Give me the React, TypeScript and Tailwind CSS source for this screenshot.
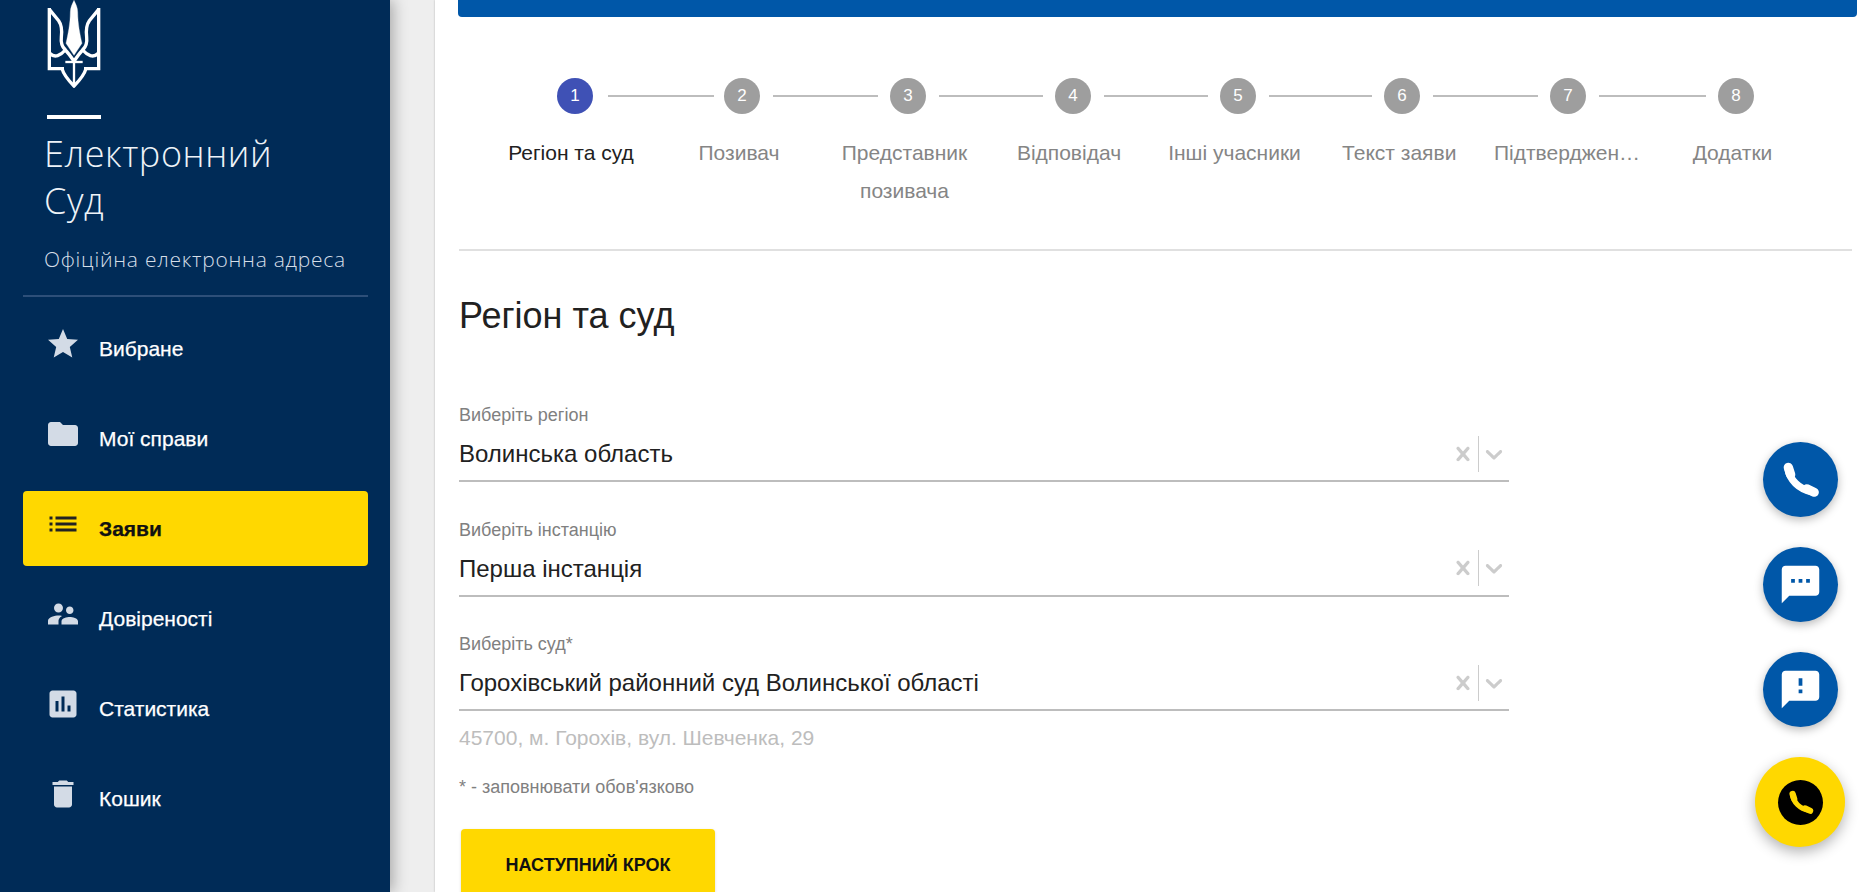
import type { ReactNode } from 'react';

const SANS = "font-['Liberation_Sans',Arial,sans-serif]";

// material icon paths
const icons = {
  star: 'M12 17.27L18.18 21l-1.64-7.03L22 9.24l-7.19-.61L12 2 9.19 8.63 2 9.24l5.46 4.73L5.82 21z',
  folder: 'M10 4H4c-1.1 0-1.99.9-1.99 2L2 18c0 1.1.9 2 2 2h16c1.1 0 2-.9 2-2V8c0-1.1-.9-2-2-2h-8l-2-2z',
  list: 'M3 13h2v-2H3v2zm0 4h2v-2H3v2zm0-8h2V7H3v2zm4 4h14v-2H7v2zm0 4h14v-2H7v2zM7 7v2h14V7H7z',
  people:
    'M16.5 12c1.38 0 2.49-1.12 2.49-2.5S17.88 7 16.5 7C15.12 7 14 8.12 14 9.5s1.12 2.5 2.5 2.5zM9 11c1.66 0 2.99-1.34 2.99-3S10.66 5 9 5C7.34 5 6 6.34 6 8s1.34 3 3 3zm7.5 3c-1.83 0-5.5.92-5.5 2.75V19h11v-2.25c0-1.83-3.67-2.75-5.5-2.75zM9 13c-2.33 0-7 1.17-7 3.5V19h7v-2.25c0-.85.33-2.34 2.37-3.47C10.5 13.1 9.66 13 9 13z',
  chart:
    'M19 3H5c-1.1 0-2 .9-2 2v14c0 1.1.9 2 2 2h14c1.1 0 2-.9 2-2V5c0-1.1-.9-2-2-2zM9 17H7v-7h2v7zm4 0h-2V7h2v10zm4 0h-2v-4h2v4z',
  trash: 'M6 19c0 1.1.9 2 2 2h8c1.1 0 2-.9 2-2V7H6v12zM19 4h-3.5l-1-1h-5l-1 1H5v2h14V4z',
  sms: 'M20 2H4c-1.1 0-1.99.9-1.99 2L2 22l4-4h14c1.1 0 2-.9 2-2V4c0-1.1-.9-2-2-2zM9 11H7V9h2v2zm4 0h-2V9h2v2zm4 0h-2V9h2v2z',
  feedback:
    'M20 2H4c-1.1 0-1.99.9-1.99 2L2 22l4-4h14c1.1 0 2-.9 2-2V4c0-1.1-.9-2-2-2zm-7 12h-2v-2h2v2zm0-4h-2V6h2v4z',
};

function Icon({ d, className }: { d: string; className: string }) {
  return (
    <svg viewBox="0 0 24 24" className={className} fill="currentColor">
      <path d={d} />
    </svg>
  );
}

function Trident() {
  return (
    <svg viewBox="22 0 160 264" className="w-[54px] h-[88px] block" fill="none" stroke="#fff" strokeWidth="10">
      <path d="M28 24V206H72" />
      <path d="M176 24V206H132" />
      <path d="M28 28L56 62C66 76 66 96 64 112C62 128 66 140 76 150" />
      <path d="M176 28L148 62C138 76 138 96 140 112C142 128 138 140 128 150" />
      <path d="M30 160C44 176 62 166 76 150C86 160 94 172 102 184C110 172 118 160 128 150C142 166 160 176 174 160" />
      <path d="M66 206C72 228 88 244 102 258C116 244 132 228 138 206" />
      <path d="M102 184V258" strokeWidth="7" />
      <path d="M76 186H128" strokeWidth="7" />
      <path
        d="M102 1C107 12 113 22 113 36C113 70 120 104 126 130L102 166L78 130C84 104 91 70 91 36C91 22 97 12 102 1Z"
        fill="#fff"
        strokeWidth="1"
      />
    </svg>
  );
}

function Phone({ className, color }: { className: string; color: string }) {
  return (
    <svg viewBox="60 56 120 120" className={className} fill="none" stroke={color} strokeLinecap="round">
      <path d="M84 82C88 114 116 144 158 152" strokeWidth="22" />
      <path d="M85 78L92 100" strokeWidth="28" />
      <path d="M140 142L163 153" strokeWidth="27" />
    </svg>
  );
}

const nav: { label: string; d: string; active?: boolean }[] = [
  { label: 'Вибране', d: icons.star },
  { label: 'Мої справи', d: icons.folder },
  { label: 'Заяви', d: icons.list, active: true },
  { label: 'Довіреності', d: icons.people },
  { label: 'Статистика', d: icons.chart },
  { label: 'Кошик', d: icons.trash },
];

function Sidebar() {
  return (
    <aside className="w-[390px] shrink-0 h-full bg-[#002b57] relative z-10 shadow-[3px_0_14px_rgba(0,0,0,0.3)]">
      <div className="pl-[47px]">
        <Trident />
        <div className="w-[54px] h-[4px] bg-white mt-[27px]" />
      </div>
      <div className="mt-[11px] pl-[44px] font-['Open_Sans',sans-serif] font-light text-[#eef3f8]">
        <div className="text-[36px] leading-[47px] tracking-[0.6px]">
          Електронний
          <br />
          Суд
        </div>
        <div className="text-[21px] leading-[30px] mt-[20px] text-[#d5dee8] tracking-[0.75px]">
          Офіційна електронна адреса
        </div>
      </div>
      <div className="ml-[23px] mr-[22px] mt-[21px] h-[2px] bg-[#2d4f79]" />
      <nav className={`ml-[23px] mr-[22px] mt-[14px] flex flex-col gap-[15px] ${SANS}`}>
        {nav.map((item) => (
          <a
            key={item.label}
            className={
              item.active
                ? 'h-[75px] flex items-center pl-[22px] rounded-[4px] bg-[#ffd800] text-[#111] font-bold'
                : 'h-[75px] flex items-center pl-[22px] rounded-[4px] text-white'
            }
          >
            <Icon
              d={item.d}
              className={
                item.active
                  ? 'w-[36px] h-[36px] -mt-[10px] text-[#222] shrink-0'
                  : 'w-[36px] h-[36px] -mt-[10px] text-[#d3dbe6] shrink-0'
              }
            />
            <span className="ml-[18px] text-[21px] leading-[24px] mt-[1px] [-webkit-text-stroke:0.25px_currentColor]">
              {item.label}
            </span>
          </a>
        ))}
      </nav>
    </aside>
  );
}

const circles = [
  { n: 1, line: 'w-[106px] ml-[15px] mr-[10px]' },
  { n: 2, line: 'w-[105px] ml-[13px] mr-[12px]' },
  { n: 3, line: 'w-[104px] ml-[13px] mr-[12px]' },
  { n: 4, line: 'w-[104px] ml-[13px] mr-[12px]' },
  { n: 5, line: 'w-[103px] ml-[13px] mr-[12px]' },
  { n: 6, line: 'w-[105px] ml-[13px] mr-[12px]' },
  { n: 7, line: 'w-[107px] ml-[13px] mr-[12px]' },
  { n: 8, line: '' },
];

const labels = [
  { text: 'Регіон та суд', col: 'w-[166px] text-[#212121]' },
  { text: 'Позивач', col: 'w-[170px] text-[#858585]' },
  { text: 'Представник позивача', col: 'w-[161px] text-[#858585] px-[15px]' },
  { text: 'Відповідач', col: 'w-[168px] text-[#858585]' },
  { text: 'Інші учасники', col: 'w-[163px] text-[#858585]' },
  { text: 'Текст заяви', col: 'w-[166.5px] text-[#858585]' },
  { text: 'Підтверджен…', col: 'w-[169px] text-[#858585] whitespace-nowrap' },
  { text: 'Додатки', col: 'w-[162px] text-[#858585]' },
];

function Stepper() {
  return (
    <div>
      <div className="flex items-center ml-[99px] mt-[61px]">
        {circles.map((c) => (
          <div key={c.n} className="flex items-center">
            <div
              className={
                c.n === 1
                  ? 'w-[36px] h-[36px] rounded-full bg-[#3f51b5] text-white flex items-center justify-center text-[17px]'
                  : 'w-[36px] h-[36px] rounded-full bg-[#9e9e9e] text-white flex items-center justify-center text-[17px]'
              }
            >
              {c.n}
            </div>
            {c.line && <div className={`${c.line} h-[2px] bg-[#bdbdbd]`} />}
          </div>
        ))}
      </div>
      <div className="flex ml-[30px] mt-[20px] text-[21px] leading-[38px]">
        {labels.map((l) => (
          <div key={l.text} className={`${l.col} text-center shrink-0`}>
            {l.text}
          </div>
        ))}
      </div>
    </div>
  );
}

function Field({ label, children }: { label: string; children: ReactNode }) {
  return (
    <div>
      <div className="text-[18px] leading-[20px] text-[#808080]">{label}</div>
      <div className="mt-[10px] pt-[1px] pb-[9px] border-b-2 border-[#bdbdbd] flex items-center h-[47px]">
        <div className="flex-1 text-[24px] leading-[30px] text-[#212121] mt-[1px]">{children}</div>
        <svg viewBox="0 0 20 20" className="w-[28px] h-[28px] text-[#cccccc]" fill="currentColor">
          <path d="M14.348 14.849c-0.469 0.469-1.229 0.469-1.697 0l-2.651-3.030-2.651 3.029c-0.469 0.469-1.229 0.469-1.697 0-0.469-0.469-0.469-1.229 0-1.697l2.758-3.15-2.759-3.152c-0.469-0.469-0.469-1.228 0-1.697s1.228-0.469 1.697 0l2.652 3.031 2.651-3.031c0.469-0.469 1.228-0.469 1.697 0s0.469 1.229 0 1.697l-2.758 3.152 2.758 3.15c0.469 0.469 0.469 1.229 0 1.698z" />
        </svg>
        <div className="w-px h-[36px] bg-[#cccccc] mx-[1px]" />
        <svg viewBox="0 0 20 20" className="w-[28px] h-[28px] text-[#cccccc] mr-[1px]" fill="currentColor">
          <path d="M4.516 7.548c0.436-0.446 1.043-0.481 1.576 0l3.908 3.747 3.908-3.747c0.533-0.481 1.141-0.446 1.576 0 0.436 0.445 0.408 1.197 0 1.615-0.406 0.418-4.695 4.502-4.695 4.502-0.217 0.223-0.502 0.335-0.789 0.335s-0.572-0.112-0.789-0.335c0 0-4.287-4.084-4.695-4.502s-0.436-1.17 0-1.615z" />
        </svg>
      </div>
    </div>
  );
}

function Fab({ d }: { d: string }) {
  return (
    <button className="w-[75px] h-[75px] rounded-full bg-[#0057a8] text-white flex items-center justify-center shadow-[0_3px_10px_rgba(0,0,0,0.28)]">
      <Icon d={d} className="w-[45px] h-[45px]" />
    </button>
  );
}

export default function App() {
  return (
    <div className={`h-screen overflow-hidden flex bg-[#eeeeee] ${SANS}`}>
      <Sidebar />
      <div className="w-[45px] shrink-0" />
      <main className="flex-1 min-w-0 h-full overflow-hidden bg-white pl-[23px] pr-[4px] shadow-[0_0_2px_rgba(0,0,0,0.25)]">
        <div className="h-[17px] bg-[#0057a8] rounded-b-[4px]" />
        <Stepper />
        <div className="h-[2px] bg-[#e0e0e0] mt-[39px] ml-[1px] mr-[5px]" />
        <h1 className="text-[36px] leading-[40px] text-[#212121] mt-[45px] ml-[1px]">Регіон та суд</h1>
        <div className="w-[1050px] ml-[1px] mt-[69px]">
          <div className="flex flex-col gap-[37.5px]">
            <Field label="Виберіть регіон">Волинська область</Field>
            <Field label="Виберіть інстанцію">Перша інстанція</Field>
            <Field label="Виберіть суд*">Горохівський районний суд Волинської області</Field>
          </div>
          <div className="text-[21px] leading-[26px] text-[#bdbdbd] mt-[14px]">
            45700, м. Горохів, вул. Шевченка, 29
          </div>
          <div className="text-[18px] leading-[20px] text-[#808080] mt-[26px]">* - заповнювати обов'язково</div>
          <button className="w-[254px] h-[72px] mt-[32px] ml-[2px] rounded-[4px] bg-[#ffd800] text-[#111] font-bold text-[18px] shadow-[0_1px_3px_rgba(0,0,0,0.15)]">
            НАСТУПНИЙ КРОК
          </button>
        </div>
      </main>
      <div className="absolute right-[16px] bottom-[45px] flex flex-col items-center gap-[30px]">
        <button className="w-[75px] h-[75px] rounded-full bg-[#0057a8] flex items-center justify-center shadow-[0_3px_10px_rgba(0,0,0,0.28)]">
          <Phone className="w-[40px] h-[40px]" color="#fff" />
        </button>
        <Fab d={icons.sms} />
        <Fab d={icons.feedback} />
        <button className="w-[90px] h-[90px] rounded-full bg-[#ffd800] flex items-center justify-center shadow-[0_5px_14px_rgba(0,0,0,0.3)]">
          <span className="w-[45px] h-[45px] rounded-full bg-black flex items-center justify-center">
            <Phone className="w-[27px] h-[27px]" color="#ffd800" />
          </span>
        </button>
      </div>
    </div>
  );
}
